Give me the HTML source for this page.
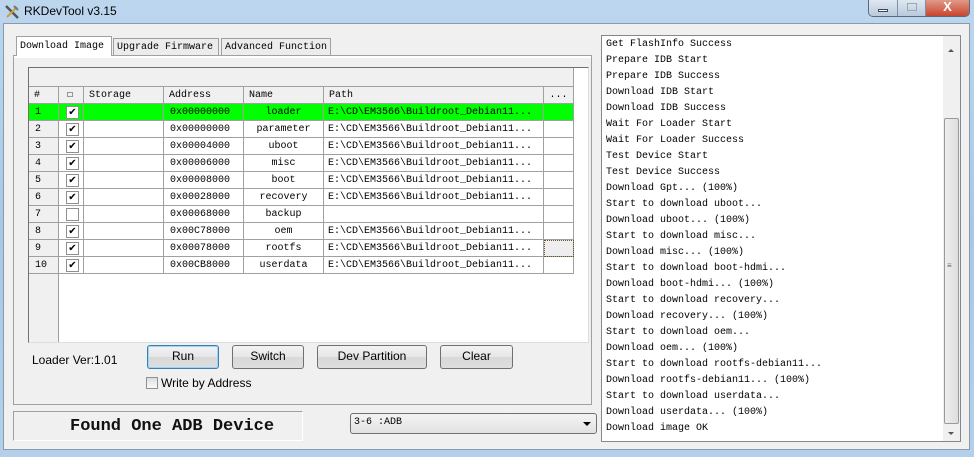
<!DOCTYPE html>
<html><head><meta charset="utf-8"><style>
*{box-sizing:border-box;margin:0;padding:0}
body{width:974px;height:457px;overflow:hidden;background:linear-gradient(180deg,#bcd6ee 0%,#a9c8e6 50%,#b4cfea 100%);position:relative;font-family:"Liberation Mono","Noto Sans CJK SC",monospace}
.a{position:absolute}
.client{left:3px;top:23px;width:967px;height:427px;background:#f0f0f0;border:1px solid #8a9aa8}
.m{font-family:"Liberation Mono","Noto Sans CJK SC",monospace;font-size:10px;color:#000}
.s{font-family:"Liberation Sans",sans-serif;font-size:12px;color:#000}
.tab{top:38px;height:18px;border:1px solid #a0a0a0;border-bottom:none;background:#ececec;font-size:10px;line-height:17px;padding-left:3px}
.btn{height:24px;top:345px;border:1px solid #707070;border-radius:3px;background:linear-gradient(#f3f3f3,#e6e6e6 50%,#d8d8d8 51%,#dedede);text-align:center;line-height:21px}
.cell{position:absolute;height:17px;border-right:1px solid #a0a0a0;border-bottom:1px solid #a0a0a0;line-height:17px;font-size:10px;white-space:nowrap;overflow:hidden}
.cb{position:absolute;width:13px;height:13px;border:1px solid #8f8f8f;background:#fff;font-size:10px;line-height:11px;text-align:center;font-family:"DejaVu Sans",sans-serif}
.log div{height:16px;line-height:16px}
</style></head><body>
<div class="a" style="left:4px;top:4px;width:16px;height:16px">
<svg width="16" height="16"><path d="M2 2 L14 14" stroke="#555" stroke-width="2.5"/><path d="M13 3 L3 13" stroke="#c9a040" stroke-width="2"/><path d="M10 2 L14 6" stroke="#777" stroke-width="2"/></svg></div>
<div class="a s" style="left:24px;top:4px;font-size:12px">RKDevTool v3.15</div>
<div class="a" style="left:868px;top:0;width:102px;height:17px;border:1px solid #5a6a7a;border-top:none;border-radius:0 0 5px 5px;overflow:hidden;display:flex">
<div style="width:29px;background:linear-gradient(#dfe8f2,#b8c9dc);border-right:1px solid #8090a0;position:relative"><div class="a" style="left:9px;top:9px;width:10px;height:3px;background:#fff;border:1px solid #445"></div></div>
<div style="width:28px;background:linear-gradient(#dfe8f2,#b8c9dc);border-right:1px solid #8090a0;position:relative"><div class="a" style="left:9px;top:3px;width:10px;height:8px;border:1px solid #9aa;"></div></div>
<div style="flex:1;background:linear-gradient(#e09a88,#c8452e);color:#fff;font:bold 13px 'Liberation Sans',sans-serif;text-align:center;line-height:14px">X</div></div>
<div class="a client"></div>
<div class="a tab m" style="left:16px;top:36px;height:20px;width:96px;background:#fff;z-index:2;line-height:19px">Download Image</div>
<div class="a tab m" style="left:113px;width:106px">Upgrade Firmware</div>
<div class="a tab m" style="left:221px;width:110px">Advanced Function</div>
<div class="a" style="left:13px;top:55px;width:579px;height:350px;border:1px solid #a0a0a0;background:#f0f0f0;z-index:1"></div>
<div class="a" style="left:14px;top:56px;width:577px;height:2px;background:#fff;z-index:1"></div>
<div class="a" style="left:28px;top:67px;width:561px;height:276px;border:1px solid #707070;border-right-color:#ddd;border-bottom-color:#ddd;background:#fff;z-index:2;overflow:hidden">
<div class="a" style="left:0;top:0;width:545px;height:19px;background:#f0f0f0;border-bottom:1px solid #a0a0a0;border-right:1px solid #a0a0a0"></div>
<div class="a" style="left:0;top:19px;width:30px;height:260px;background:#f0f0f0;border-right:1px solid #a0a0a0"></div>
<div id="g"></div>
</div>
<div class="a s" style="left:32px;top:353px;z-index:3">Loader Ver:1.01</div>
<div class="a btn s" style="left:147px;width:72px;border-color:#3c7fb1;box-shadow:inset 0 0 0 1px #9ad5f5;z-index:3">Run</div>
<div class="a btn s" style="left:232px;width:72px;z-index:3">Switch</div>
<div class="a btn s" style="left:317px;width:110px;z-index:3">Dev Partition</div>
<div class="a btn s" style="left:440px;width:73px;z-index:3">Clear</div>
<div class="a" style="left:146px;top:377px;width:12px;height:12px;border:1px solid #8f8f8f;background:linear-gradient(#ddd,#fafafa);z-index:3"></div>
<div class="a s" style="left:161px;top:376px;z-index:3">Write by Address</div>
<div class="a" style="left:13px;top:411px;width:290px;height:30px;border-top:1px solid #a0a0a0;border-left:1px solid #a0a0a0;border-bottom:1px solid #fff;border-right:1px solid #fff"></div>
<div class="a m" style="left:70px;top:417px;font-size:17px;font-family:'Liberation Mono',monospace;font-weight:bold;color:#111">Found One ADB Device</div>
<div class="a" style="left:350px;top:413px;width:247px;height:21px;border:1px solid #707070;border-radius:3px;background:linear-gradient(#f4f4f4,#e2e2e2)"></div>
<div class="a m" style="left:354px;top:417px">3-6 :ADB</div>
<div class="a" style="left:583px;top:422px;border:4px solid transparent;border-top:4px solid #000"></div>
<div class="a" style="left:601px;top:35px;width:360px;height:407px;border:1px solid #828790;background:#fff"></div>
<div class="a m log" style="left:606px;top:37px" id="log"></div>
<div class="a" style="left:943px;top:36px;width:17px;height:405px;background:#f0f0f0"></div>
<div class="a" style="left:944px;top:118px;width:15px;height:306px;border:1px solid #9a9a9a;border-radius:2px;background:linear-gradient(90deg,#eee,#ddd)"></div>
<div class="a" style="left:947px;top:265px;font-size:8px;line-height:3px;color:#666">≡</div>
<div class="a" style="left:948px;top:46px;border:3px solid transparent;border-bottom:3px solid #555"></div>
<div class="a" style="left:948px;top:432px;border:3px solid transparent;border-top:3px solid #555"></div>
<script>
var rows=[["1","0x00000000","loader",1],["2","0x00000000","parameter",1],["3","0x00004000","uboot",1],["4","0x00006000","misc",1],["5","0x00008000","boot",1],["6","0x00028000","recovery",1],["7","0x00068000","backup",0],["8","0x00C78000","oem",1],["9","0x00078000","rootfs",1],["10","0x00CB8000","userdata",1]];
var cols=[[0,30],[30,25],[55,80],[135,80],[215,80],[295,220],[515,30]];
var h='';var hd=['#','☐','Storage','Address','Name','Path','...'];
for(var c=0;c<7;c++)h+='<div class="cell m" style="top:19px;left:'+cols[c][0]+'px;width:'+cols[c][1]+'px;background:#f0f0f0;padding-left:'+(c==1?8:5)+'px;'+(c==6?'text-align:center;padding:0':'')+'">'+hd[c]+'</div>';
rows.forEach(function(r,i){var y=36+i*17;var bg=i==0?'#00ff00':'#fff';
h+='<div class="cell m" style="top:'+y+'px;left:0;width:30px;padding-left:6px;background:'+(i==0?bg:'#f0f0f0')+'">'+r[0]+'</div>';
for(var c=1;c<7;c++){var t='',st='';if(c==3){t=r[1];st='padding-left:6px'}if(c==4){t=r[2];st='text-align:center'}if(c==5&&r[3]){t='E:\\CD\\EM3566\\Buildroot_Debian11...';st='padding-left:4px'}
var b=bg;if(c==6&&i==8)st+=';background:#eee;outline:1px dotted #653;outline-offset:-1px';
h+='<div class="cell m" style="top:'+y+'px;left:'+cols[c][0]+'px;width:'+cols[c][1]+'px;background:'+b+';'+st+'">'+t+'</div>'}
h+='<div class="cb" style="left:37px;top:'+(y+2)+'px">'+(r[3]?'✔':'')+'</div>';});
document.getElementById('g').innerHTML=h;
var L=["Get FlashInfo Success","Prepare IDB Start","Prepare IDB Success","Download IDB Start","Download IDB Success","Wait For Loader Start","Wait For Loader Success","Test Device Start","Test Device Success","Download Gpt... (100%)","Start to download uboot...","Download uboot... (100%)","Start to download misc...","Download misc... (100%)","Start to download boot-hdmi...","Download boot-hdmi... (100%)","Start to download recovery...","Download recovery... (100%)","Start to download oem...","Download oem... (100%)","Start to download rootfs-debian11...","Download rootfs-debian11... (100%)","Start to download userdata...","Download userdata... (100%)","Download image OK"];
document.getElementById('log').innerHTML=L.map(function(x){return '<div>'+x+'</div>'}).join('');
</script>
</body></html>
